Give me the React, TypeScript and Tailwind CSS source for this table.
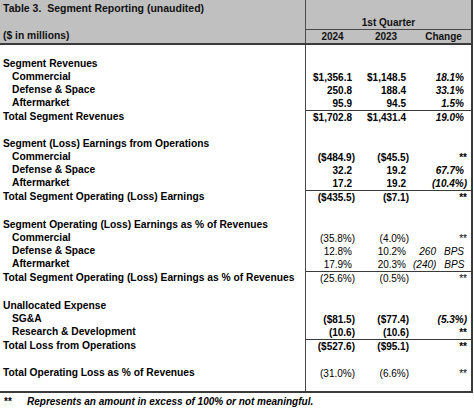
type Row = {
  label?: string;
  sub?: boolean;
  v?: [string, string, string];
  total?: boolean;
  kind?: 'bold' | 'pct';
  h: string;
};

const rows: Row[] = [
  { h: 'h-[13px]' },
  { label: 'Segment Revenues', h: 'h-[13px]' },
  { label: 'Commercial', sub: true, v: ['$1,356.1', '$1,148.5', '18.1%'], kind: 'bold', h: 'h-[13px]' },
  { label: 'Defense & Space', sub: true, v: ['250.8', '188.4', '33.1%'], kind: 'bold', h: 'h-[13px]' },
  { label: 'Aftermarket', sub: true, v: ['95.9', '94.5', '1.5%'], kind: 'bold', h: 'h-[13px]' },
  { label: 'Total Segment Revenues', v: ['$1,702.8', '$1,431.4', '19.0%'], kind: 'bold', total: true, h: 'h-[14px]' },
  { h: 'h-[14px]' },
  { label: 'Segment (Loss) Earnings from Operations', h: 'h-[13px]' },
  { label: 'Commercial', sub: true, v: ['($484.9)', '($45.5)', '**'], kind: 'bold', h: 'h-[13px]' },
  { label: 'Defense & Space', sub: true, v: ['32.2', '19.2', '67.7%'], kind: 'bold', h: 'h-[13px]' },
  { label: 'Aftermarket', sub: true, v: ['17.2', '19.2', '(10.4%)'], kind: 'bold', h: 'h-[13px]' },
  { label: 'Total Segment Operating (Loss) Earnings', v: ['($435.5)', '($7.1)', '**'], kind: 'bold', total: true, h: 'h-[14px]' },
  { h: 'h-[15px]' },
  { label: 'Segment Operating (Loss) Earnings as % of Revenues', h: 'h-[13px]' },
  { label: 'Commercial', sub: true, v: ['(35.8%)', '(4.0%)', '**'], kind: 'pct', h: 'h-[13px]' },
  { label: 'Defense & Space', sub: true, v: ['12.8%', '10.2%', '260|BPS'], kind: 'pct', h: 'h-[13px]' },
  { label: 'Aftermarket', sub: true, v: ['17.9%', '20.3%', '(240)|BPS'], kind: 'pct', h: 'h-[13px]' },
  { label: 'Total Segment Operating (Loss) Earnings as % of Revenues', v: ['(25.6%)', '(0.5%)', '**'], kind: 'pct', total: true, h: 'h-[14px]' },
  { h: 'h-[15px]' },
  { label: 'Unallocated Expense', h: 'h-[13px]' },
  { label: 'SG&A', sub: true, v: ['($81.5)', '($77.4)', '(5.3%)'], kind: 'bold', h: 'h-[13px]' },
  { label: 'Research & Development', sub: true, v: ['(10.6)', '(10.6)', '**'], kind: 'bold', h: 'h-[13px]' },
  { label: 'Total Loss from Operations', v: ['($527.6)', '($95.1)', '**'], kind: 'bold', total: true, h: 'h-[14px]' },
  { h: 'h-[14px]' },
  { label: 'Total Operating Loss as % of Revenues', v: ['(31.0%)', '(6.6%)', '**'], kind: 'pct', h: 'h-[13px]' },
  { h: 'h-[11px]' },
];

function Val({ text, change, kind }: { text: string; change?: boolean; kind?: 'bold' | 'pct' }) {
  const paren = text.endsWith(')') || text === '**';
  let cls = kind === 'bold' ? 'font-bold' : 'font-normal';
  if (change && text !== '**') cls += ' italic';
  if (text.includes('|')) {
    const [a, b] = text.split('|');
    return (
      <span className={cls + ' pr-[3px]'}>
        {a}
        <span className="ml-[8px]">{b}</span>
      </span>
    );
  }
  return <span className={paren ? cls : cls + ' pr-[3px]'}>{text}</span>;
}

export default function App() {
  return (
    <div className="w-[474px] h-[418px] bg-white text-black text-[10px] leading-none font-['Liberation_Sans',Arial,sans-serif]">
      <div className="w-[473px] border-r-2 border-b-2 border-[#3a3a3a]">
        {/* Header */}
        <div className="grid grid-cols-[305px_1fr] bg-[#c0c0c0] border-b-2 border-[#3a3a3a] font-bold text-[#111]">
          <div className="flex flex-col justify-between pl-[3px]">
            <div className="h-[17px] flex items-center text-[10.5px]">Table 3.&nbsp;&nbsp;Segment Reporting (unaudited)</div>
            <div className="h-[13px] flex items-center text-[10.3px]">($ in millions)</div>
          </div>
          <div className="border-l border-[#4a4a4a]">
            <div className="h-[17px]" />
            <div className="h-[13px] flex items-center justify-center border-b border-[#4a4a4a]">1st Quarter</div>
            <div className="h-[13px] grid grid-cols-[53px_54px_1fr] items-center text-center">
              <div>2024</div>
              <div>2023</div>
              <div className="pl-[3px]">Change</div>
            </div>
          </div>
        </div>

        {/* Body */}
        {rows.map((r, i) => (
          <div key={i} className={'grid grid-cols-[305px_1fr] ' + r.h}>
            <div
              className={
                'flex items-center font-bold whitespace-nowrap text-[10.25px] ' + (r.sub ? 'pl-[12px]' : 'pl-[3px]')
              }
            >
              {r.label}
            </div>
            <div
              className={
                'grid grid-cols-[53px_54px_1fr] border-l border-[#4a4a4a] ' +
                (r.total ? 'border-t border-t-[#3a3a3a]' : '')
              }
            >
              {r.v &&
                r.v.map((t, j) => (
                  <div key={j} className="flex items-center justify-end pr-[4px]">
                    <Val text={t} change={j === 2} kind={r.kind} />
                  </div>
                ))}
            </div>
          </div>
        ))}
      </div>

      {/* Footnote */}
      <div className="flex items-center h-[17px] font-bold italic">
        <span className="w-[27px] pl-[4px] not-italic">**</span>
        <span>Represents an amount in excess of 100% or not meaningful.</span>
      </div>
    </div>
  );
}
